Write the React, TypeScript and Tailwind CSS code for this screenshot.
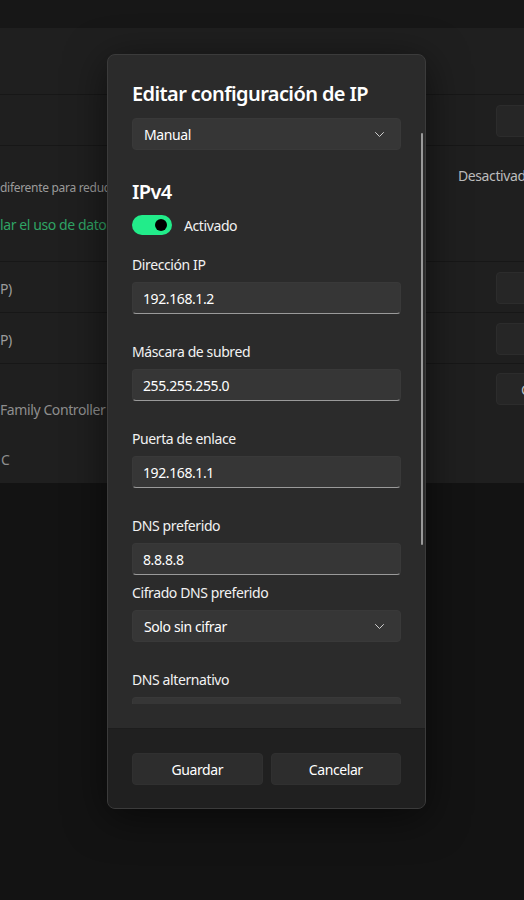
import React from "react";

const FIELDS_TOP = [
  { label: "Dirección IP", value: "192.168.1.2" },
  { label: "Máscara de subred", value: "255.255.255.0" },
  { label: "Puerta de enlace", value: "192.168.1.1" },
];

// body text is a little narrower than Noto Sans, like Segoe UI
const T14 = "text-[14px] tracking-[-0.4px]";
const T20 = "text-[20px] font-semibold tracking-[-0.6px]";

const Chevron = () => (
  <svg width="9" height="5" viewBox="0 0 9 5" fill="none">
    <path d="M0.5 0.5L4.5 4.5L8.5 0.5" stroke="#cfcfcf" strokeWidth="1" strokeLinecap="round" strokeLinejoin="round" />
  </svg>
);

const Select = ({ value, className = "" }: { value: string; className?: string }) => (
  <div
    className={
      "flex h-8 items-center justify-between rounded-[4px] border border-[#393939] bg-[#363636] pl-[11px] pr-[16px] text-white " +
      T14 +
      " " +
      className
    }
  >
    <span>{value}</span>
    <Chevron />
  </div>
);

const Field = ({ label, value, className = "" }: { label: string; value?: string; className?: string }) => (
  <div className={className}>
    <div className={"h-5 leading-5 text-[#f2f2f2] " + T14}>{label}</div>
    <div className={"mt-[7px] flex h-8 items-center rounded-[4px] border border-[#393939] border-b-[#9a9a9a] bg-[#363636] px-[10px] text-white " + T14}>
      {value}
    </div>
  </div>
);

const SideButton = ({ text = "" }: { text?: string }) => (
  <div className={"-mr-8 ml-auto flex h-8 w-[60px] shrink-0 items-center rounded-[4px] border border-[#2c2c2c] bg-[#262626] pl-[24px] text-[#bdbdbd] " + T14}>
    {text}
  </div>
);

export default function App() {
  return (
    <div
      className="relative h-[900px] w-[524px] overflow-hidden bg-[#131313]"
      style={{ fontFamily: '"Noto Sans", "Open Sans", sans-serif' }}
    >
      {/* dimmed settings page behind the dialog */}
      <div className="h-[28px] bg-[#171717]" />
      <div className="flex flex-col overflow-hidden bg-[#1f1f1f]">
        <div className="h-[67px] border-b border-[#171717]" />
        <div className="flex h-[51px] items-center border-b border-[#171717] pt-[1px]">
          <SideButton />
        </div>
        <div className="flex h-[116px] border-b border-[#171717]">
          <div className="flex flex-col">
            <div className="mt-[34px] whitespace-nowrap text-[12px] leading-4 tracking-[-0.3px] text-[#9c9c9c]">diferente para reducir</div>
            <div className={"mt-[19px] whitespace-nowrap leading-5 text-[#2fa565] " + T14}>lar el uso de datos</div>
          </div>
          <div className={"ml-auto mt-[20px] w-[66px] whitespace-nowrap leading-5 text-[#bcbcbc] " + T14}>Desactivad</div>
        </div>
        <div className="flex h-[51px] items-center border-b border-[#171717] pt-[2px]">
          <span className={"text-[#9c9c9c] " + T14}>P)</span>
          <SideButton />
        </div>
        <div className="flex h-[51px] items-center border-b border-[#171717] pt-[2px]">
          <span className={"text-[#9c9c9c] " + T14}>P)</span>
          <SideButton />
        </div>
        <div className="flex h-[119px]">
          <div className="flex flex-col">
            <div className={"mt-[36px] whitespace-nowrap leading-5 text-[#8e8e8e] " + T14}>Family Controller</div>
            <div className={"ml-[1px] mt-[30px] leading-5 text-[#8e8e8e] " + T14}>C</div>
          </div>
          <div className="ml-auto mt-[9px] flex">
            <SideButton text="C" />
          </div>
        </div>
      </div>

      {/* dialog */}
      <div className="absolute left-[107px] top-[54px] flex h-[755px] w-[319px] flex-col overflow-hidden rounded-lg border border-[#3b3b3b] bg-[#2b2b2b] shadow-[0_8px_40px_rgba(0,0,0,0.55)]">
        <div className="pb-6">
          <div className="h-[649px] overflow-hidden px-6 pt-[25px]">
            <h1 className={"h-7 leading-7 text-white " + T20}>Editar configuración de IP</h1>
            <Select value="Manual" className="mt-[10px]" />
            <h2 className={"mt-[28px] h-7 leading-7 text-white " + T20}>IPv4</h2>
            <div className="mt-[9px] flex h-5 items-center">
              <div className="flex h-5 w-10 items-center justify-end rounded-full bg-[#22ec8a] pr-[5px]">
                <div className="h-3 w-3 rounded-full bg-black" />
              </div>
              <span className={"ml-3 text-[#f2f2f2] " + T14}>Activado</span>
            </div>
            {FIELDS_TOP.map((f, i) => (
              <Field key={f.label} label={f.label} value={f.value} className={i === 0 ? "mt-5" : "mt-7"} />
            ))}
            <Field label="DNS preferido" value="8.8.8.8" className="mt-7" />
            <div className={"mt-2 h-5 leading-5 text-[#f2f2f2] " + T14}>Cifrado DNS preferido</div>
            <Select value="Solo sin cifrar" className="mt-[7px]" />
            <Field label="DNS alternativo" className="mt-7" />
          </div>
        </div>
        <div className="flex flex-1 gap-2 border-t border-[#1d1d1d] bg-[#202020] px-6 pt-6">
          <button className={"h-8 flex-1 rounded-[4px] border border-[#303030] bg-[#2d2d2d] text-white " + T14}>Guardar</button>
          <button className={"h-8 flex-1 rounded-[4px] border border-[#303030] bg-[#2d2d2d] text-white " + T14}>Cancelar</button>
        </div>
        <div className="absolute left-[313px] top-[78px] h-[412px] w-[2px] rounded-full bg-[#9a9a9a]" />
      </div>
    </div>
  );
}
